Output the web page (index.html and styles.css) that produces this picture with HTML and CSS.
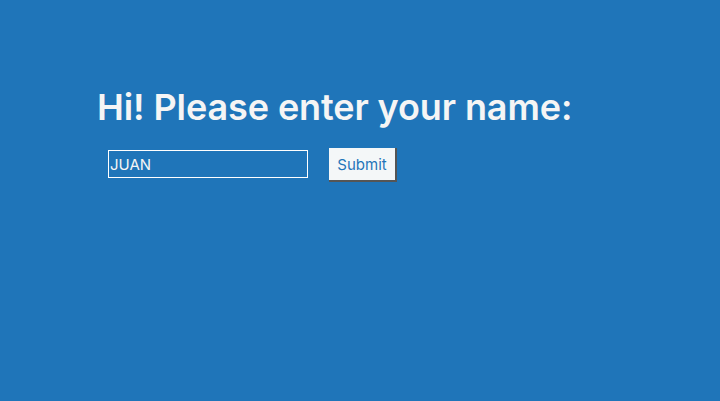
FILE: index.html
```html
<!DOCTYPE html>
<html>
<head>
<meta charset="utf-8">
<link rel="stylesheet" href="styles.css">
</head>
<body>
<main class="page">
  <h1 class="title">Hi! Please enter your name:</h1>
  <form class="form">
    <input class="name-input" type="text" value="JUAN">
    <button class="submit" type="button">Submit</button>
  </form>
</main>
</body>
</html>
```
FILE: styles.css
```css
html, body {
  margin: 0;
  padding: 0;
  height: 100%;
}
body {
  background: #1f75b9;
  font-family: Inter, "Noto Sans", sans-serif;
  color: #f5f5f5;
}
.page {
  padding: 84px 0 0 97px;
}
.title {
  margin: 0;
  font-size: 36px;
  font-weight: 600;
  letter-spacing: -0.1px;
  line-height: 46px;
}
.form {
  display: flex;
  align-items: flex-start;
  gap: 21px;
  margin: 20px 0 0 11px;
}
.name-input {
  box-sizing: border-box;
  width: 200px;
  height: 28px;
  border: 1px solid #ffffff;
  background: transparent;
  color: #f5f5f5;
  font-family: Inter, sans-serif;
  font-size: 15px;
  padding: 0 1px;
  margin: 0;
}
.submit {
  box-sizing: border-box;
  height: 34px;
  width: 68px;
  padding: 0;
  margin: -2px 0 0 0;
  background: #f4f7f8;
  color: #1f75b9;
  font-family: Inter, sans-serif;
  font-size: 15px;
  border-style: solid;
  border-color: #555555;
  border-width: 0 2px 2px 0;
}
```
